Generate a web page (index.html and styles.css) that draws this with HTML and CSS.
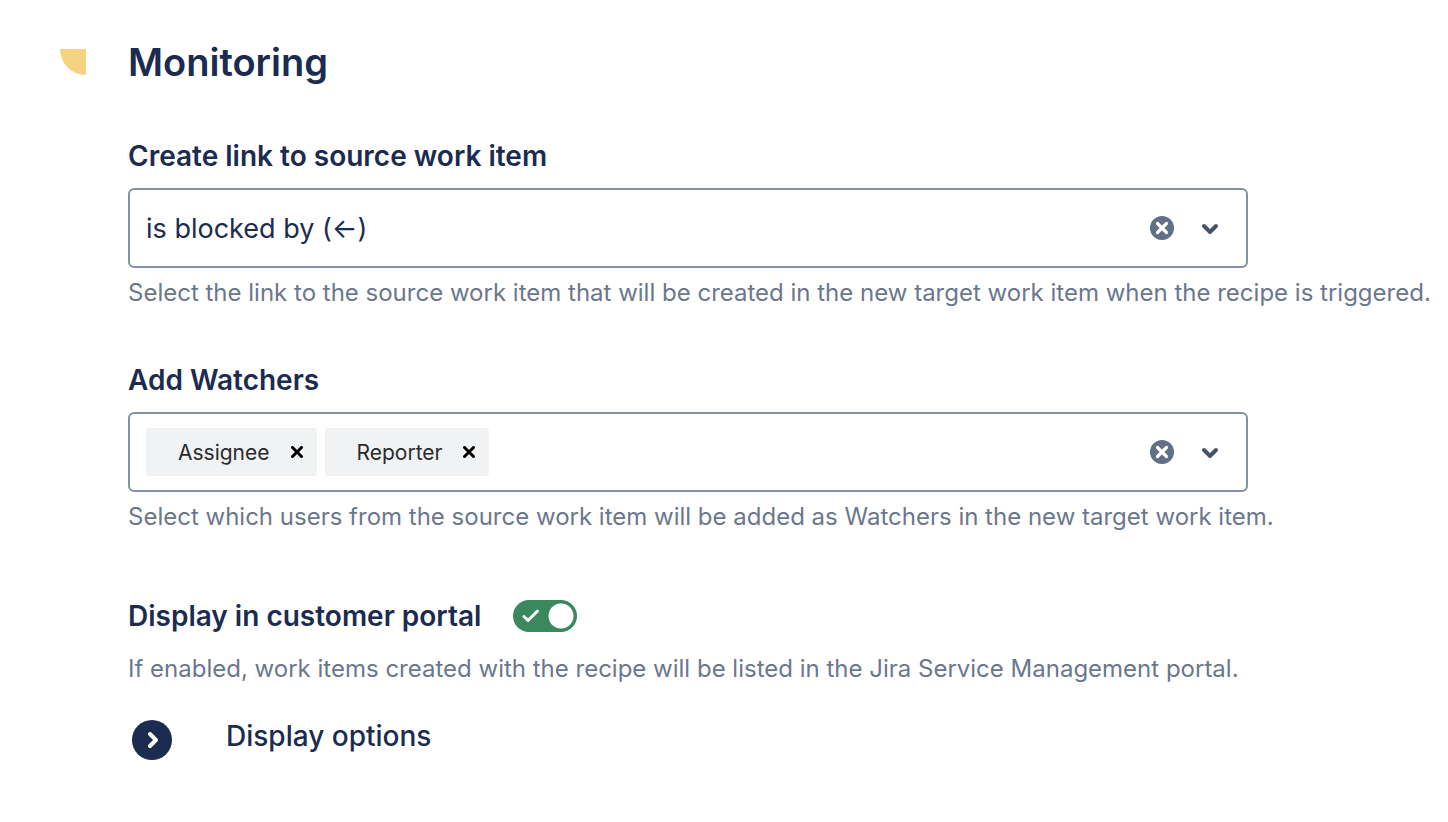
FILE: index.html
```html
<!DOCTYPE html>
<html lang="en">
<head>
    <meta charset="UTF-8">
    <meta name="viewport" content="width=device-width, initial-scale=1.0">
    <title>Recipe - Monitoring</title>
    <link rel="stylesheet" href="styles.css">
</head>
<body>
    <main class="section">
        <svg class="marker" viewBox="0 0 26 26" aria-hidden="true"><path d="M0 0H26V26A26 26 0 0 1 0 0Z" fill="#f6d37f"/></svg>
        <form class="content">
            <h1>Monitoring</h1>

            <div class="field">
                <label class="title" for="linkType">Create link to source work item</label>
                <div class="control">
                    <input class="value" id="linkType" type="text" value="is blocked by (←)">
                    <button class="icon-button" type="button" aria-label="Clear link">
                        <svg width="24" height="24" viewBox="0 0 24 24"><circle cx="12" cy="12" r="12" fill="#626f86"/><path d="M7.500 7.500L16.500 16.500M16.500 7.500L7.500 16.500" stroke="#fff" stroke-width="3.200" stroke-linecap="round"/></svg>
                    </button>
                    <button class="icon-button" type="button" aria-label="Open link list">
                        <svg width="24" height="24" viewBox="0 0 24 24"><path d="M6 10L12 16L18 10" fill="none" stroke="#44546f" stroke-width="4" stroke-linecap="round" stroke-linejoin="round"/></svg>
                    </button>
                </div>
                <p class="help">Select the link to the source work item that will be created in the new target work item when the recipe is triggered.</p>
            </div>

            <div class="field">
                <label class="title" for="watchers">Add Watchers</label>
                <div class="control">
                    <span class="tag">Assignee
                        <button class="remove" type="button" aria-label="Remove Assignee"><svg width="12" height="12" viewBox="0 0 12 12"><path d="M1.500 1.500L10.500 10.500M10.500 1.500L1.500 10.500" stroke="#000" stroke-width="3" stroke-linecap="round"/></svg></button>
                    </span>
                    <span class="tag">Reporter
                        <button class="remove" type="button" aria-label="Remove Reporter"><svg width="12" height="12" viewBox="0 0 12 12"><path d="M1.500 1.500L10.500 10.500M10.500 1.500L1.500 10.500" stroke="#000" stroke-width="3" stroke-linecap="round"/></svg></button>
                    </span>
                    <input class="value" id="watchers" type="text">
                    <button class="icon-button" type="button" aria-label="Clear watchers">
                        <svg width="24" height="24" viewBox="0 0 24 24"><circle cx="12" cy="12" r="12" fill="#626f86"/><path d="M7.500 7.500L16.500 16.500M16.500 7.500L7.500 16.500" stroke="#fff" stroke-width="3.200" stroke-linecap="round"/></svg>
                    </button>
                    <button class="icon-button" type="button" aria-label="Open watchers list">
                        <svg width="24" height="24" viewBox="0 0 24 24"><path d="M6 10L12 16L18 10" fill="none" stroke="#44546f" stroke-width="4" stroke-linecap="round" stroke-linejoin="round"/></svg>
                    </button>
                </div>
                <p class="help">Select which users from the source work item will be added as Watchers in the new target work item.</p>
            </div>

            <div class="portal">
                <label class="title" for="portal">Display in customer portal</label>
                <span class="toggle">
                    <input id="portal" type="checkbox" checked>
                    <svg class="check" viewBox="0 0 18 14" aria-hidden="true"><path d="M2 7.500L6 11.500L15.500 2" fill="none" stroke="#fff" stroke-width="3" stroke-linecap="round" stroke-linejoin="round"/></svg>
                </span>
            </div>
            <p class="help portal-help">If enabled, work items created with the recipe will be listed in the Jira Service Management portal.</p>

            <div class="options">
                <button class="expand" id="expand" type="button" aria-labelledby="optionsTitle">
                    <svg width="40" height="40" viewBox="0 0 40 40"><circle cx="20" cy="20" r="20" fill="#1c2b50"/><path d="M18 14L24 20L18 26" fill="none" stroke="#fff" stroke-width="4" stroke-linecap="round" stroke-linejoin="round"/></svg>
                </button>
                <h2 id="optionsTitle">Display options</h2>
            </div>
        </form>
    </main>
</body>
</html>
```
FILE: styles.css
```css
* {
    box-sizing: border-box;
}
body {
    margin: 0;
    background: #fff;
    color: #1c2b50;
    font-family: Inter, "Liberation Sans", sans-serif;
}
h1, h2, p {
    margin: 0;
}
button, input {
    font: inherit;
    color: inherit;
}
button {
    display: flex;
    padding: 0;
    border: none;
    background: none;
    cursor: pointer;
}
.section {
    display: flex;
    gap: 42px;
    padding: 36px 0 0 60px;
}
.marker {
    flex: none;
    width: 26px;
    height: 26px;
    margin-top: 13px;
}
.content {
    flex: 1;
    min-width: 0;
}
h1 {
    margin-bottom: 52px;
    font-size: 38px;
    line-height: 52px;
    font-weight: 600;
}
.title {
    font-size: 28px;
    line-height: 32px;
    font-weight: 600;
}
.field {
    margin-bottom: 54px;
}
.field .title {
    display: block;
    margin-bottom: 16px;
}
.control {
    display: flex;
    align-items: center;
    gap: 8px;
    max-width: 1120px;
    height: 80px;
    padding: 0 24px 0 16px;
    border: 2px solid #8590a2;
    border-radius: 6px;
}
.value {
    flex: 1;
    min-width: 0;
    padding: 0;
    border: none;
    outline: none;
    background: none;
    font-size: 27px;
}
.icon-button + .icon-button {
    margin-left: 16px;
}
.tag {
    display: flex;
    align-items: center;
    gap: 21px;
    height: 48px;
    padding: 0 14px 0 32px;
    border-radius: 4px;
    background: #f1f2f4;
    color: #292a2e;
    font-size: 21px;
}
.help {
    margin-top: 8px;
    color: #6b778c;
    font-size: 24px;
    line-height: 34px;
    white-space: nowrap;
}
.portal {
    display: flex;
    align-items: center;
    gap: 32px;
    margin-top: 66px;
}
.toggle {
    position: relative;
    display: flex;
}
.toggle input {
    appearance: none;
    width: 64px;
    height: 32px;
    margin: 0;
    border-radius: 16px;
    background: radial-gradient(circle at 48px 16px, #fff 12px, transparent 13px) #3b875e;
    cursor: pointer;
}
.check {
    position: absolute;
    top: 9px;
    left: 9px;
    width: 18px;
    height: 14px;
    pointer-events: none;
}
.portal-help {
    margin-top: 20px;
}
.options {
    display: flex;
    gap: 54px;
    margin-top: 34px;
    padding-left: 4px;
}
h2 {
    font-size: 28px;
    line-height: 32px;
    font-weight: 500;
}
```
